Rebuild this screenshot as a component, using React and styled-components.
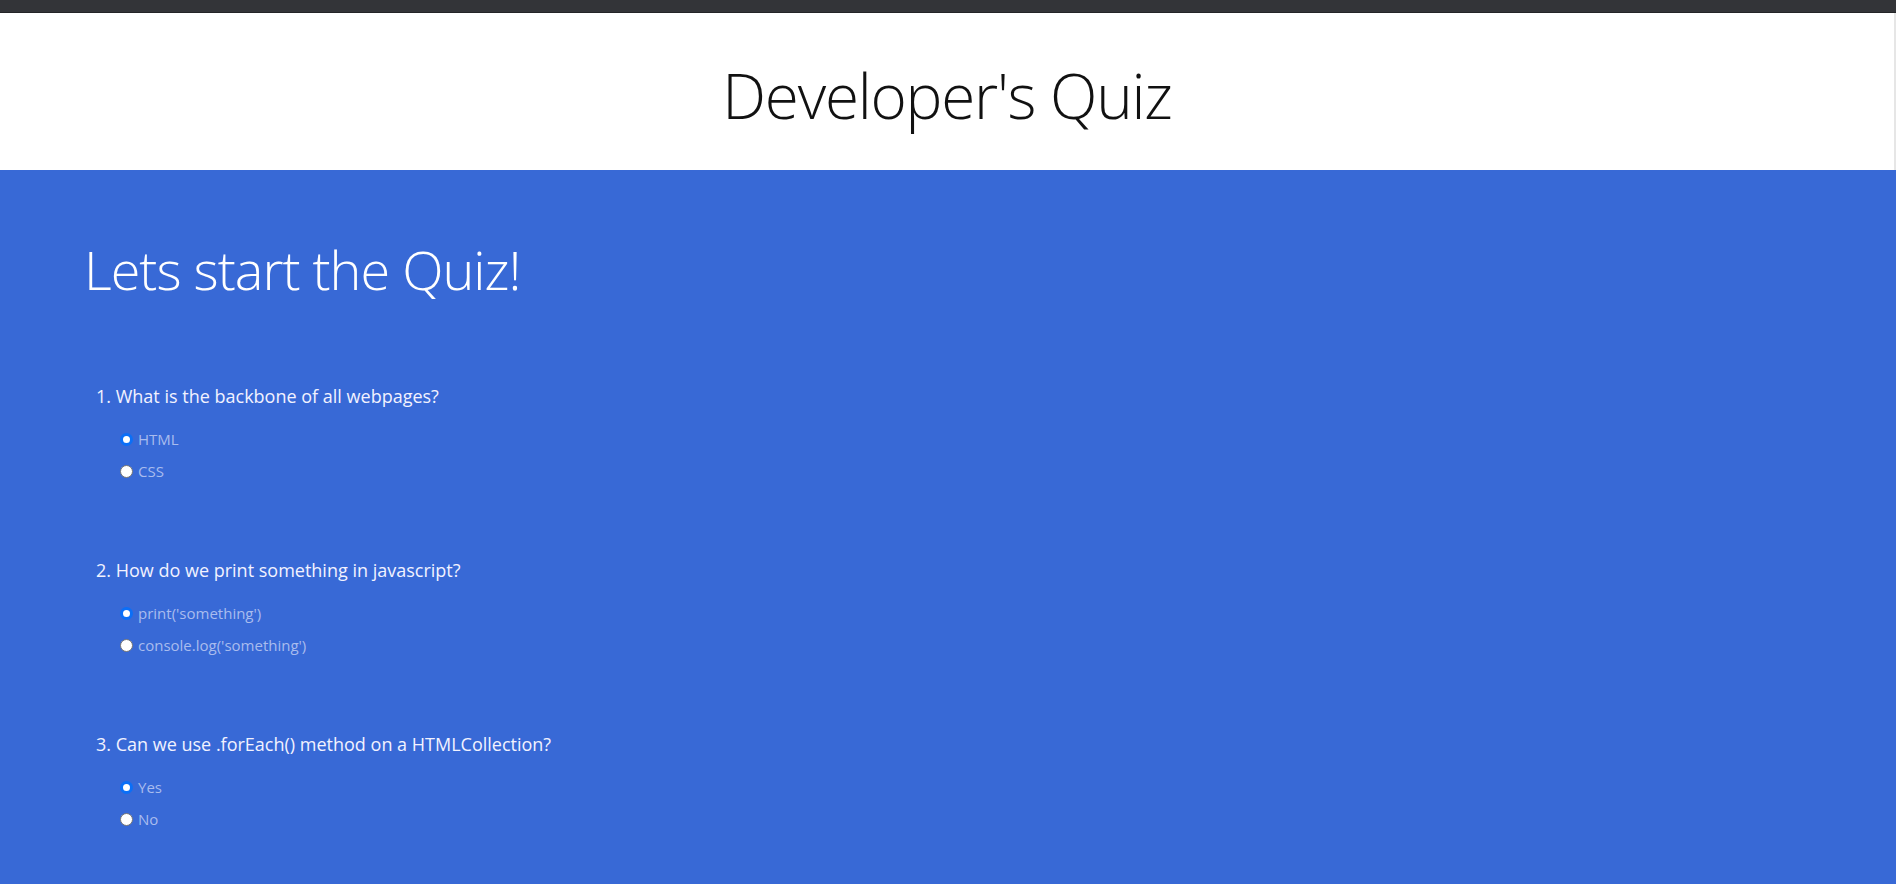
import React from "react";
import styled, { createGlobalStyle } from "styled-components";

const questions = [
  {
    id: 1,
    text: "What is the backbone of all webpages?",
    options: ["HTML", "CSS"],
  },
  {
    id: 2,
    text: "How do we print something in javascript?",
    options: ["print('something')", "console.log('something')"],
  },
  {
    id: 3,
    text: "Can we use .forEach() method on a HTMLCollection?",
    options: ["Yes", "No"],
  },
];

const App = () => {
  return (
    <>
      <GlobalStyle />
      <TopBar />
      <Header>
        <Title>Developer's Quiz</Title>
      </Header>
      <Main>
        <Heading>Lets start the Quiz!</Heading>
        <QuizForm>
          {questions.map((q) => (
            <Question key={q.id}>
              <QuestionText>
                {q.id}. {q.text}
              </QuestionText>
              <Options>
                {q.options.map((opt, i) => (
                  <Option key={opt}>
                    <Radio
                      type="radio"
                      name={`q${q.id}`}
                      defaultChecked={i === 0}
                    />
                    <span>{opt}</span>
                  </Option>
                ))}
              </Options>
            </Question>
          ))}
        </QuizForm>
      </Main>
    </>
  );
};

export default App;

const GlobalStyle = createGlobalStyle`
  html, body {
    margin: 0;
    padding: 0;
    background: #3869d6;
  }
  body {
    font-family: "Open Sans", "Noto Sans", sans-serif;
    min-height: 100vh;
  }
`;

const TopBar = styled.div`
  height: 13px;
  background: #333438;
  border-bottom: 1px solid #232427;
  box-sizing: border-box;
`;

const Header = styled.header`
  background: #ffffff;
  height: 157px;
  box-sizing: border-box;
  padding-top: 51px;
  text-align: center;
  border-right: 2px solid #e6e6e6;
`;

const Title = styled.h1`
  margin: 0;
  font-size: 62px;
  line-height: 62px;
  font-weight: 300;
  color: #111;
  letter-spacing: -1.25px;
`;

const Main = styled.main`
  background: #3869d6;
  padding: 72px 0 40px 84px;
  color: #fff;
`;

const Heading = styled.h2`
  margin: 0;
  font-size: 54px;
  line-height: 54px;
  font-weight: 300;
  letter-spacing: -1px;
`;

const QuizForm = styled.form`
  margin-top: 88px;
  padding-left: 12px;
  display: flex;
  flex-direction: column;
  gap: 71px;
`;

const Question = styled.div`
  display: flex;
  flex-direction: column;
`;

const QuestionText = styled.p`
  margin: 0 0 15px;
  font-size: 18px;
  line-height: 24px;
  color: #f2f2ff;
`;

const Options = styled.div`
  display: flex;
  flex-direction: column;
  padding-left: 24px;
`;

const Option = styled.label`
  display: flex;
  align-items: center;
  height: 32px;
  gap: 5px;
  font-size: 15px;
  color: #a9bcee;
`;

const Radio = styled.input`
  appearance: none;
  margin: 0;
  width: 13px;
  height: 13px;
  border-radius: 50%;
  background: #fff;
  border: 1px solid #767676;
  box-sizing: border-box;

  &:checked {
    border: 3px solid #0b6ff7;
  }
`;
